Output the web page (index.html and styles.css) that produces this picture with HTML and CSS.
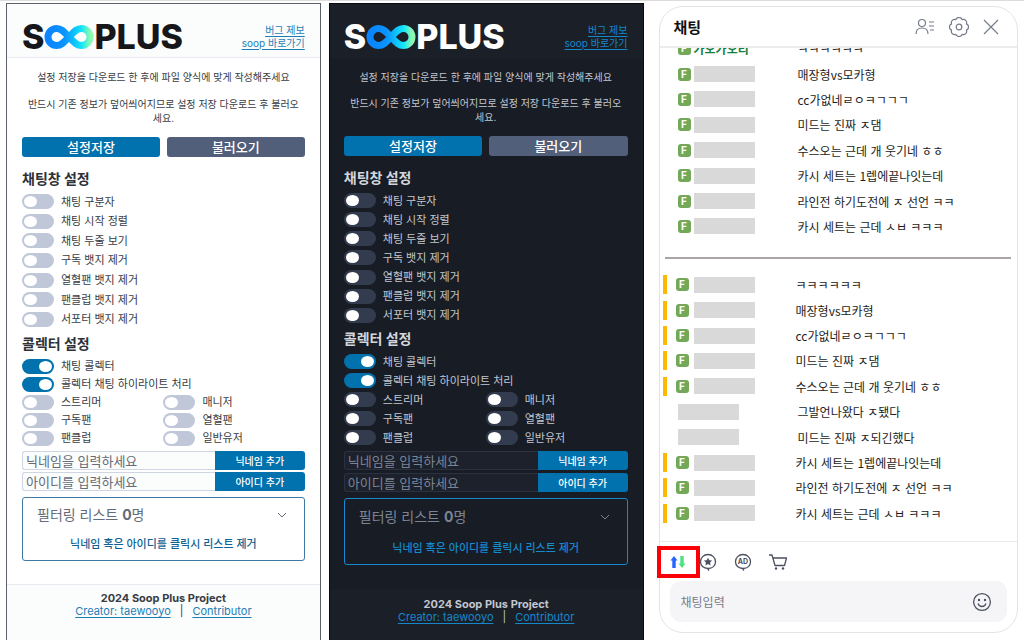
FILE: index.html
```html
<!DOCTYPE html>
<html lang="ko">

<head>
  <meta charset="UTF-8">
  <meta name="viewport" content="width=device-width, initial-scale=1.0">
  <title>Soop Plus</title>
  <link rel="stylesheet" href="styles.css">
</head>

<body>
  <div class="page">
    <section class="popup light">
      <header class="popup-header">
        <div class="logo">
          <span>S</span>
          <svg class="logo-loop" viewBox="0 0 50 24">
            <defs>
              <linearGradient id="loopLight" x1="0" x2="1" y1="0" y2="0">
                <stop offset="0" stop-color="#0a84ff" />
                <stop offset="0.4" stop-color="#0a94ff" />
                <stop offset="0.8" stop-color="#12e6fb" />
                <stop offset="1" stop-color="#8dfab0" />
              </linearGradient>
            </defs>
            <path d="M25 12C21 8 18 3.5 12.5 3.5A8.5 8.5 0 0 0 12.5 20.5C18 20.5 21 16 25 12C29 8 32 3.5 37.5 3.5A8.5 8.5 0 0 1 37.5 20.5C32 20.5 29 16 25 12Z" fill="none" stroke="url(#loopLight)" stroke-width="7" />
          </svg>
          <span>PLUS</span>
        </div>
        <nav class="links">
          <a href="#">버그 제보</a>
          <a href="#">soop 바로가기</a>
        </nav>
      </header>

      <main class="popup-main">
        <div class="guide">
          <p>설정 저장을 다운로드 한 후에 파일 양식에 맞게 작성해주세요</p>
          <p>반드시 기존 정보가 덮어씌어지므로 설정 저장 다운로드 후 불러오세요.</p>
        </div>
        <div class="actions">
          <button class="primary">설정저장</button>
          <button class="secondary">불러오기</button>
        </div>

        <h2>채팅창 설정</h2>
        <div class="switches chat-switches">
          <label><input type="checkbox" role="switch">채팅 구분자</label>
          <label><input type="checkbox" role="switch">채팅 시작 정렬</label>
          <label><input type="checkbox" role="switch">채팅 두줄 보기</label>
          <label><input type="checkbox" role="switch">구독 뱃지 제거</label>
          <label><input type="checkbox" role="switch">열혈팬 뱃지 제거</label>
          <label><input type="checkbox" role="switch">팬클럽 뱃지 제거</label>
          <label><input type="checkbox" role="switch">서포터 뱃지 제거</label>
        </div>

        <h2>콜렉터 설정</h2>
        <div class="switches collector-switches">
          <label class="wide"><input type="checkbox" role="switch" checked>채팅 콜렉터</label>
          <label class="wide"><input type="checkbox" role="switch" checked>콜렉터 채팅 하이라이트 처리</label>
          <label><input type="checkbox" role="switch">스트리머</label>
          <label><input type="checkbox" role="switch">매니저</label>
          <label><input type="checkbox" role="switch">구독팬</label>
          <label><input type="checkbox" role="switch">열혈팬</label>
          <label><input type="checkbox" role="switch">팬클럽</label>
          <label><input type="checkbox" role="switch">일반유저</label>
        </div>

        <form class="add-form">
          <input type="text" placeholder="닉네임을 입력하세요" aria-label="닉네임">
          <button type="button">닉네임 추가</button>
        </form>
        <form class="add-form">
          <input type="text" placeholder="아이디를 입력하세요" aria-label="아이디">
          <button type="button">아이디 추가</button>
        </form>

        <details class="filter" open>
          <summary>
            <span>필터링 리스트 <b>0</b>명</span>
            <svg class="chevron" viewBox="0 0 10 6"><path d="M1 1l4 4 4-4" /></svg>
          </summary>
          <p>닉네임 혹은 아이디를 클릭시 리스트 제거</p>
        </details>
      </main>

      <footer class="popup-footer">
        <strong>2024 Soop Plus Project</strong>
        <div class="credits"><a href="#">Creator: taewooyo</a><span>|</span><a href="#">Contributor</a></div>
      </footer>
    </section>

    <section class="popup dark">
      <header class="popup-header">
        <div class="logo">
          <span>S</span>
          <svg class="logo-loop" viewBox="0 0 50 24">
            <defs>
              <linearGradient id="loopDark" x1="0" x2="1" y1="0" y2="0">
                <stop offset="0" stop-color="#0a84ff" />
                <stop offset="0.4" stop-color="#0a94ff" />
                <stop offset="0.8" stop-color="#12e6fb" />
                <stop offset="1" stop-color="#8dfab0" />
              </linearGradient>
            </defs>
            <path d="M25 12C21 8 18 3.5 12.5 3.5A8.5 8.5 0 0 0 12.5 20.5C18 20.5 21 16 25 12C29 8 32 3.5 37.5 3.5A8.5 8.5 0 0 1 37.5 20.5C32 20.5 29 16 25 12Z" fill="none" stroke="url(#loopDark)" stroke-width="7" />
          </svg>
          <span>PLUS</span>
        </div>
        <nav class="links">
          <a href="#">버그 제보</a>
          <a href="#">soop 바로가기</a>
        </nav>
      </header>

      <main class="popup-main">
        <div class="guide">
          <p>설정 저장을 다운로드 한 후에 파일 양식에 맞게 작성해주세요</p>
          <p>반드시 기존 정보가 덮어씌어지므로 설정 저장 다운로드 후 불러오세요.</p>
        </div>
        <div class="actions">
          <button class="primary">설정저장</button>
          <button class="secondary">불러오기</button>
        </div>

        <h2>채팅창 설정</h2>
        <div class="switches chat-switches">
          <label><input type="checkbox" role="switch">채팅 구분자</label>
          <label><input type="checkbox" role="switch">채팅 시작 정렬</label>
          <label><input type="checkbox" role="switch">채팅 두줄 보기</label>
          <label><input type="checkbox" role="switch">구독 뱃지 제거</label>
          <label><input type="checkbox" role="switch">열혈팬 뱃지 제거</label>
          <label><input type="checkbox" role="switch">팬클럽 뱃지 제거</label>
          <label><input type="checkbox" role="switch">서포터 뱃지 제거</label>
        </div>

        <h2>콜렉터 설정</h2>
        <div class="switches collector-switches">
          <label class="wide"><input type="checkbox" role="switch" checked>채팅 콜렉터</label>
          <label class="wide"><input type="checkbox" role="switch" checked>콜렉터 채팅 하이라이트 처리</label>
          <label><input type="checkbox" role="switch">스트리머</label>
          <label><input type="checkbox" role="switch">매니저</label>
          <label><input type="checkbox" role="switch">구독팬</label>
          <label><input type="checkbox" role="switch">열혈팬</label>
          <label><input type="checkbox" role="switch">팬클럽</label>
          <label><input type="checkbox" role="switch">일반유저</label>
        </div>

        <form class="add-form">
          <input type="text" placeholder="닉네임을 입력하세요" aria-label="닉네임">
          <button type="button">닉네임 추가</button>
        </form>
        <form class="add-form">
          <input type="text" placeholder="아이디를 입력하세요" aria-label="아이디">
          <button type="button">아이디 추가</button>
        </form>

        <details class="filter" open>
          <summary>
            <span>필터링 리스트 <b>0</b>명</span>
            <svg class="chevron" viewBox="0 0 10 6"><path d="M1 1l4 4 4-4" /></svg>
          </summary>
          <p>닉네임 혹은 아이디를 클릭시 리스트 제거</p>
        </details>
      </main>

      <footer class="popup-footer">
        <strong>2024 Soop Plus Project</strong>
        <div class="credits"><a href="#">Creator: taewooyo</a><span>|</span><a href="#">Contributor</a></div>
      </footer>
    </section>

    <section class="chat">
      <header class="chat-header">
        <h1>채팅</h1>
        <button class="icon" aria-label="참여자">
          <svg width="20" height="18" viewBox="0 0 20 18">
            <circle cx="7" cy="5" r="3.5" />
            <path d="M1 16c0-3.800 2.500-6 6-6s6 2.200 6 6M14 4h5M14 8h5M15 12h4" />
          </svg>
        </button>
        <button class="icon" aria-label="설정">
          <svg width="20" height="20" viewBox="0 0 20 20">
            <path d="M17.400 6.900A3.300 3.300 0 0 1 17.400 13.100A3.300 3.300 0 0 1 13.100 17.400A3.300 3.300 0 0 1 6.900 17.400A3.300 3.300 0 0 1 2.600 13.100A3.300 3.300 0 0 1 2.600 6.900A3.300 3.300 0 0 1 6.900 2.600A3.300 3.300 0 0 1 13.100 2.600A3.300 3.300 0 0 1 17.400 6.900Z" stroke-linejoin="round" />
            <circle cx="10" cy="10" r="2.8" />
          </svg>
        </button>
        <button class="icon" aria-label="닫기">
          <svg width="16" height="16" viewBox="0 0 16 16"><path d="M1 1l14 14M15 1L1 15" /></svg>
        </button>
      </header>

      <div class="chat-body">
        <ul class="messages collected-list">
          <li><div class="user"><i class="badge">F</i><span class="name">가오가오리</span></div>ㅋㅋㅋㅋㅋㅋ</li>
          <li><div class="user"><i class="badge">F</i><span class="mask"></span></div>매장형vs모카형</li>
          <li><div class="user"><i class="badge">F</i><span class="mask"></span></div>cc가없네ㄹㅇㅋㄱㄱㄱ</li>
          <li><div class="user"><i class="badge">F</i><span class="mask"></span></div>미드는 진짜 ㅈ댐</li>
          <li><div class="user"><i class="badge">F</i><span class="mask"></span></div>수스오는 근데 개 웃기네 ㅎㅎ</li>
          <li><div class="user"><i class="badge">F</i><span class="mask"></span></div>카시 세트는 1렙에끝나잇는데</li>
          <li><div class="user"><i class="badge">F</i><span class="mask"></span></div>라인전 하기도전에 ㅈ 선언 ㅋㅋ</li>
          <li><div class="user"><i class="badge">F</i><span class="mask"></span></div>카시 세트는 근데 ㅅㅂ ㅋㅋㅋ</li>
        </ul>
        <hr>
        <ul class="messages live-list">
          <li class="highlight"><div class="user"><i class="badge">F</i><span class="mask"></span></div>ㅋㅋㅋㅋㅋㅋ</li>
          <li class="highlight"><div class="user"><i class="badge">F</i><span class="mask"></span></div>매장형vs모카형</li>
          <li class="highlight"><div class="user"><i class="badge">F</i><span class="mask"></span></div>cc가없네ㄹㅇㅋㄱㄱㄱ</li>
          <li class="highlight"><div class="user"><i class="badge">F</i><span class="mask"></span></div>미드는 진짜 ㅈ댐</li>
          <li class="highlight"><div class="user"><i class="badge">F</i><span class="mask"></span></div>수스오는 근데 개 웃기네 ㅎㅎ</li>
          <li><div class="user"><span class="mask"></span></div>그발언나왔다 ㅈ됐다</li>
          <li><div class="user"><span class="mask"></span></div>미드는 진짜 ㅈ되긴했다</li>
          <li class="highlight"><div class="user"><i class="badge">F</i><span class="mask"></span></div>카시 세트는 1렙에끝나잇는데</li>
          <li class="highlight"><div class="user"><i class="badge">F</i><span class="mask"></span></div>라인전 하기도전에 ㅈ 선언 ㅋㅋ</li>
          <li class="highlight"><div class="user"><i class="badge">F</i><span class="mask"></span></div>카시 세트는 근데 ㅅㅂ ㅋㅋㅋ</li>
        </ul>
      </div>

      <footer class="chat-footer">
        <div class="toolbar">
          <button class="sort" aria-label="채팅 정렬">
            <svg width="16" height="12" viewBox="0 0 16 12">
              <path d="M4 0l3.500 4.500H5.700V12H2.300V4.500H0.500z" fill="#2563ff" />
              <path d="M12 12l-3.500-4.500h1.800V0h3.400v7.500h1.800z" fill="#4ce184" />
            </svg>
          </button>
          <button class="tool" aria-label="별풍선">
            <svg width="18" height="18" viewBox="0 0 18 18">
              <path d="M9 15.500c-4.500 0-7.500-2.800-7.500-6.800S4.700 1.500 9 1.500s7.500 3.200 7.500 7.200-3 6.800-7.500 6.800zM8.500 15.500l1.500 2" />
              <path class="solid" d="M9 4.700l1.300 2.500 2.800.4-2 2 .5 2.800L9 11.100l-2.600 1.300.5-2.800-2-2 2.800-.4z" />
            </svg>
          </button>
          <button class="tool" aria-label="애드벌룬">
            <svg width="18" height="18" viewBox="0 0 18 18">
              <path d="M9 15.500c-4.500 0-7.500-2.800-7.500-6.800S4.700 1.500 9 1.500s7.500 3.200 7.500 7.200-3 6.800-7.500 6.800zM8.500 15.500l1.500 2" />
              <text x="9" y="11" text-anchor="middle">AD</text>
            </svg>
          </button>
          <button class="tool" aria-label="쇼핑">
            <svg width="18" height="18" viewBox="0 0 18 18">
              <path d="M0 2h3l3 10.500h9.500L17.500 5H4" stroke-linejoin="round" />
              <circle class="solid" cx="7" cy="15.500" r="1.200" />
              <circle class="solid" cx="14" cy="15.500" r="1.200" />
            </svg>
          </button>
        </div>
        <div class="chat-input">
          <input type="text" placeholder="채팅입력" aria-label="채팅입력">
          <button class="tool emoji" aria-label="이모티콘">
            <svg width="20" height="20" viewBox="0 0 20 20">
              <circle cx="10" cy="10" r="8.400" />
              <path d="M6 11.500c.7 2 2.200 3 4 3s3.300-1 4-3" />
              <circle class="solid" cx="7" cy="8" r="1.200" />
              <circle class="solid" cx="13" cy="8" r="1.200" />
            </svg>
          </button>
        </div>
      </footer>
    </section>
  </div>
</body>

</html>
```

FILE: styles.css
```css
* {
  box-sizing: border-box;
}

body {
  margin: 0;
  background: #fff;
  font-family: Inter, "Noto Sans CJK KR", sans-serif;
}

h1,
h2,
p,
ul {
  margin: 0;
  padding: 0;
}

button,
input {
  font-family: inherit;
  margin: 0;
}

button {
  border: 0;
  padding: 0;
  background: none;
  cursor: pointer;
}

.page {
  display: flex;
  height: 100vh;
  padding: 2px 6px 0;
  border-top: 1px solid #dcdcdc;
}

/* popup */
.popup {
  flex: 315 1 0;
  min-width: 0;
  display: flex;
  flex-direction: column;
  border: 1px solid var(--frame);
  border-bottom: 0;
  background: var(--bg);
  color: var(--text);
}

.light {
  --frame: #5d606b;
  --bg: #fff;
  --card: #fbfcfc;
  --line: #e7eaf0;
  --text: #373c44;
  --heading: #2d3138;
  --logo: #15171b;
  --link: #1f7db5;
  --switch: #bfc7d9;
  --field: #fbfcfc;
  --field-line: #cfd5e2;
  --placeholder: #646b79;
  --filter-line: #3f78a3;
  --filter-text: #0f6292;
  --side: 15px;
  --guide-gap: 13px;
  --block-gap: 12px;
  --chat-height: 137px;
  --heading-gap: 5px;
  --row: 18px;
  --form-gap: 2px;
  --filter-top: 7px;
  --filter-gap: 9px;
  --footer: 56px;
}

.dark {
  --frame: #08090c;
  --bg: #181c25;
  --card: #1b1f28;
  --line: #1b1f28;
  --text: #c2c7d0;
  --heading: #d3d6dd;
  --logo: #fff;
  --link: #1588cb;
  --switch: #333c4e;
  --field: #1c212c;
  --field-line: #2a3140;
  --placeholder: #7b8495;
  --filter-line: #158acd;
  --filter-text: #158acd;
  --side: 14px;
  --guide-gap: 12px;
  --block-gap: 12px;
  --chat-height: 134px;
  --heading-gap: 4px;
  --row: 19px;
  --form-gap: 3px;
  --filter-top: 8px;
  --filter-gap: 11px;
  --footer: 50px;
  margin-left: 8px;
}

.popup-header {
  display: flex;
  align-items: center;
  justify-content: space-between;
  height: 54px;
  padding: 12px 15px 0 var(--side);
  background: var(--card);
  border-bottom: 1px solid var(--line);
}

.logo {
  display: flex;
  align-items: center;
  font-size: 34px;
  font-weight: 800;
  line-height: 24px;
  color: var(--logo);
}

.logo-loop {
  width: 50px;
  height: 24px;
}

.links {
  display: flex;
  flex-direction: column;
  align-items: flex-end;
  font-size: 10px;
  line-height: 13px;
}

a {
  color: var(--link);
  text-underline-offset: 2px;
}

.popup-main {
  padding: 12px 15px 0 var(--side);
}

.guide {
  padding: 0 4px;
  font-size: 10px;
  line-height: 14px;
  text-align: center;
}

.guide p + p {
  margin-top: var(--guide-gap);
}

.actions {
  display: grid;
  grid-template-columns: 1fr 1fr;
  gap: 7px;
  margin-top: 12px;
}

.actions button {
  height: 20px;
  border-radius: 3px;
  color: #fff;
  font-size: 13px;
  font-weight: 500;
  line-height: 20px;
}

.primary,
.add-form button {
  background: #0172ad;
}

.secondary {
  background: #525f7a;
}

.popup h2 {
  margin: var(--block-gap) 0 3px;
  color: var(--heading);
  font-size: 14px;
  line-height: 20px;
}

.popup .switches + h2 {
  margin-top: var(--heading-gap);
}

.switches {
  display: grid;
}

.chat-switches {
  height: var(--chat-height);
}

.collector-switches {
  grid-template-columns: 1fr 1fr;
  grid-auto-rows: var(--row);
  margin-bottom: 4px;
}

.wide {
  grid-column: 1 / -1;
}

.switches label {
  display: flex;
  align-items: center;
  gap: 7px;
  font-size: 11px;
  line-height: 16px;
}

.switches input {
  appearance: none;
  display: flex;
  align-items: center;
  width: 32px;
  height: 15px;
  padding: 0 2px;
  border-radius: 8px;
  background: var(--switch);
}

.switches input::before {
  content: "";
  width: 13px;
  height: 11px;
  border-radius: 50%;
  background: #fff;
}

.switches input:checked {
  justify-content: flex-end;
  background: #0172ad;
}

.add-form {
  display: flex;
  height: 19px;
}

.add-form + .add-form {
  margin-top: var(--form-gap);
}

.add-form input {
  flex: 1;
  min-width: 0;
  padding: 0 3px;
  border: 1px solid var(--field-line);
  border-right: 0;
  border-radius: 3px 0 0 3px;
  background: var(--field);
  color: var(--text);
  font-size: 13px;
}

.add-form input::placeholder {
  color: var(--placeholder);
}

.add-form button {
  width: 90px;
  border-radius: 0 3px 3px 0;
  color: #fff;
  font-size: 10px;
  font-weight: 500;
}

.filter {
  margin-top: 6px;
  padding: var(--filter-top) 14px 6px;
  border: 1px solid var(--filter-line);
  border-radius: 3px;
}

.filter summary {
  display: flex;
  align-items: center;
  justify-content: space-between;
  color: var(--placeholder);
  font-size: 14px;
  line-height: 20px;
  list-style: none;
}

.chevron {
  width: 10px;
  height: 6px;
  margin-right: 3px;
  fill: none;
  stroke: var(--placeholder);
}

.filter p {
  margin-top: var(--filter-gap);
  color: var(--filter-text);
  font-size: 11px;
  font-weight: 500;
  line-height: 20px;
  text-align: center;
}

.popup-footer {
  height: var(--footer);
  margin-top: auto;
  padding-top: 7px;
  border-top: 1px solid var(--line);
  background: var(--card);
  font-size: 11px;
  line-height: 13px;
  text-align: center;
}

.popup-footer strong {
  display: block;
}

.credits {
  display: flex;
  justify-content: center;
  gap: 9px;
}

/* chat window */
.chat {
  flex: 360 1 0;
  min-width: 0;
  display: flex;
  flex-direction: column;
  margin: 3px 0 7px 15px;
  border: 1px solid #e4e4e6;
  border-radius: 24px;
  font-family: "Noto Sans CJK KR", sans-serif;
}

.chat-header {
  display: flex;
  align-items: center;
  gap: 14px;
  height: 41px;
  padding: 0 18px 0 14px;
  border-bottom: 2px solid #ececee;
}

.chat-header h1 {
  margin-right: auto;
  color: #111;
  font-size: 15px;
  line-height: 22px;
}

.icon svg,
.tool svg,
.sort svg {
  display: block;
}

.icon svg {
  fill: none;
  stroke: #757b8a;
  stroke-width: 1.2;
}

.chat-body {
  flex: 1;
  min-height: 0;
  display: flex;
  flex-direction: column;
  padding-bottom: 15px;
  overflow: hidden;
}

.messages {
  display: grid;
  grid-auto-rows: 1fr;
  align-items: center;
  min-height: 0;
  list-style: none;
}

.collected-list {
  flex: 8 1 0;
  margin-top: -12px;
}

.live-list {
  flex: 10 1 0;
}

.chat-body hr {
  width: calc(100% - 11px);
  height: 2px;
  margin: 18px auto 13px;
  border: 0;
  background: #aaa4a4;
}

.messages li {
  display: flex;
  align-items: center;
  height: 19px;
  padding-left: 18px;
  color: #1c1c20;
  font-size: 12px;
  line-height: 19px;
}

.messages .highlight {
  margin-left: 3px;
  padding-left: 9px;
  border-left: 4px solid #ffb800;
}

.user {
  display: flex;
  align-items: center;
  gap: 3px;
  width: 120px;
}

.highlight .user {
  gap: 5px;
}

.badge {
  width: 13px;
  height: 13px;
  border-radius: 3px;
  background: #72a857;
  color: #fff;
  font: bold 10px/13px Inter, sans-serif;
  text-align: center;
}

.name {
  color: #15803d;
  font-weight: 700;
}

.mask {
  width: 61px;
  height: 16px;
  background: #d9d9d9;
}

.chat-footer {
  padding: 4px 10px 10px;
  border-top: 1px solid #e8e8ea;
}

.toolbar {
  display: flex;
  align-items: center;
  height: 32px;
  margin-left: -4px;
}

.toolbar button {
  display: flex;
  align-items: center;
  justify-content: center;
  width: 35px;
  height: 32px;
}

/* red guide frame around the sort button */
.toolbar .sort {
  position: relative;
  width: 25px;
}

.sort::after {
  content: "";
  position: absolute;
  inset: 0 -9px;
  border: 4px solid #fb0007;
}

.tool svg {
  fill: none;
  stroke: #4c5060;
  stroke-width: 1.3;
}

.tool .solid,
.tool text {
  fill: #4c5060;
  stroke: none;
}

.tool text {
  font: bold 7px Inter, sans-serif;
}

.chat-input {
  display: flex;
  align-items: center;
  height: 41px;
  margin-top: 3px;
  padding: 0 15px 0 11px;
  border-radius: 11px;
  background: #f5f5f8;
}

.chat-input input {
  flex: 1;
  min-width: 0;
  padding: 0;
  border: 0;
  background: none;
  font-size: 12px;
}

.chat-input input::placeholder {
  color: #757b8a;
}
```
